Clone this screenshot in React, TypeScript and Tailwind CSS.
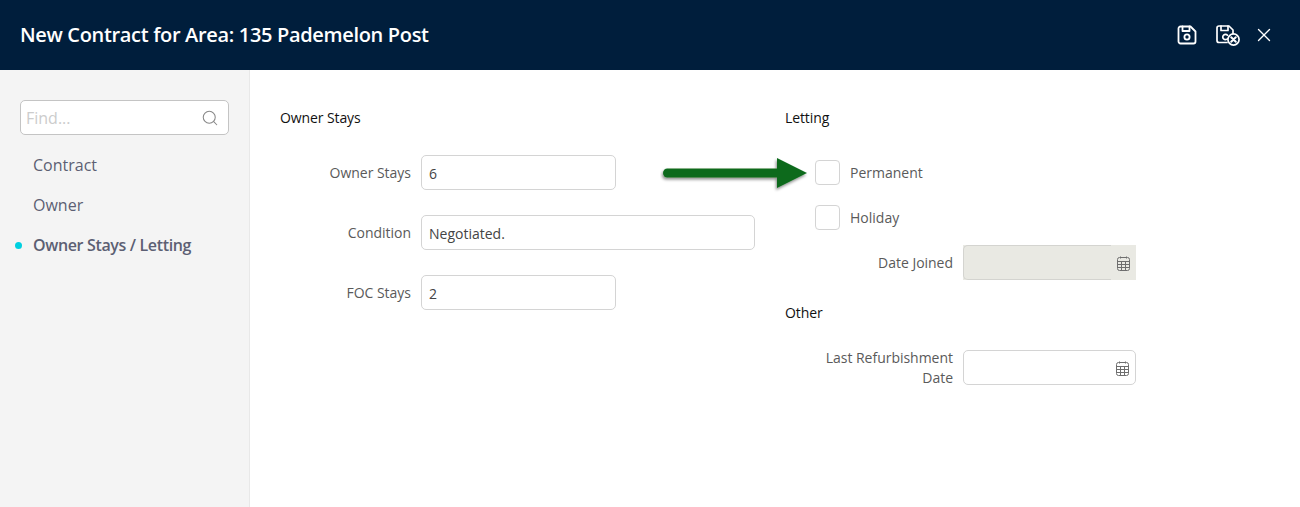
import React from 'react';
import { Search, X } from 'lucide-react';

const labelClass = 'text-[14px] leading-[20px] text-[#5a5a5a] text-right tracking-[-0.02px]';
const inputClass = 'h-[35px] rounded-[5px] border border-[#d4d4d4] bg-white pl-[7px] pr-2 pt-[1px] flex items-center text-[14px] text-[#444]';
const titleClass = 'text-[14px] font-medium leading-[22px] tracking-[-0.1px] text-[#111]';

const CalendarIcon = () => (
  <svg width="13" height="15" viewBox="0 0 13 15" fill="none" stroke="#6e6e6e" strokeWidth="1">
    <path d="M3.5 0.5v2M9.5 0.5v2" />
    <rect x="0.5" y="1.5" width="12" height="13" rx="2" />
    <path d="M0.5 5.5h12M0.5 8.5h12M0.5 11.5h12M4.5 5.5v9M8.5 5.5v9" />
  </svg>
);

const SaveCloseIcon = () => (
  <svg width="26" height="24" viewBox="0 0 26 24" fill="none" stroke="white" strokeWidth="1.7" strokeLinecap="round" strokeLinejoin="round">
    <path d="M12 19.5H4a2 2 0 0 1-2-2V5a2 2 0 0 1 2-2h10l4 4v3.5" />
    <path d="M6 3v4.5h7V3" />
    <path d="M12.5 12.2a2.7 2.7 0 1 0 0 3.6" />
    <circle cx="18.5" cy="16.5" r="5.6" />
    <path d="M16.2 14.2l4.6 4.6M20.8 14.2l-4.6 4.6" strokeWidth="2" />
  </svg>
);

const SaveDiskIcon = () => (
  <svg width="20" height="20" viewBox="0 0 20 20" fill="none" stroke="white" strokeWidth="1.8" strokeLinecap="round" strokeLinejoin="round">
    <path d="M3.5 1.5h10l5 5v10a2 2 0 0 1-2 2h-13a2 2 0 0 1-2-2v-13a2 2 0 0 1 2-2z" />
    <path d="M5.5 1.5v4.5h7V1.5" />
    <circle cx="10" cy="12" r="2.6" />
  </svg>
);

const Arrow = () => (
  <svg width="150" height="44" viewBox="0 0 150 44" className="absolute left-[660px] top-[151px]">
    <defs>
      <filter id="arrow-shadow" x="-10%" y="-30%" width="120%" height="170%">
        <feDropShadow dx="-1" dy="2" stdDeviation="1.5" floodColor="#000" floodOpacity="0.45" />
      </filter>
    </defs>
    <g filter="url(#arrow-shadow)">
      <path d="M7.5 22h112" stroke="#0e6b1c" strokeWidth="9" strokeLinecap="round" />
      <path d="M117 7l30 15-30 15z" fill="#0e6b1c" />
    </g>
  </svg>
);

const App: React.FC = () => {
  return (
    <div className="relative flex h-[507px] w-[1300px] flex-col overflow-hidden bg-white font-['Open_Sans',sans-serif]">
      <div className="flex h-[70px] shrink-0 items-center justify-between bg-[#001e3c] pl-5 pr-[25px]">
        <div className="text-[20px] font-semibold tracking-[-0.33px] text-white">New Contract for Area: 135 Pademelon Post</div>
        <div className="flex items-center">
          <SaveDiskIcon />
          <div className="ml-[18px]"><SaveCloseIcon /></div>
          <X className="ml-[12px] text-white" size={22} strokeWidth={1.5} />
        </div>
      </div>

      <div className="flex flex-1">
        <div className="w-[250px] shrink-0 border-r border-[#e8e8e8] bg-[#f4f4f4] pl-5 pt-[30px]">
          <div className="flex h-[35px] w-[209px] items-center justify-between rounded-[5px] border border-[#c4c4c4] bg-white pl-[5px] pr-[9px]">
            <span className="text-[16px] text-[#ccc]">Find...</span>
            <Search size={18} strokeWidth={1.4} className="text-[#888]" />
          </div>
          <div className="mt-[10px] flex h-[40px] items-center pl-[13px] text-[16px] text-[#5c5f73]">Contract</div>
          <div className="flex h-[40px] items-center pl-[13px] text-[16px] text-[#5c5f73]">Owner</div>
          <div className="relative flex h-[40px] items-center pl-[13px] text-[16px] font-semibold tracking-[-0.35px] text-[#5c5f73]">
            <span className="absolute left-[-5px] top-[17px] h-[7px] w-[7px] rounded-full bg-[#00d0e0]" />
            Owner Stays / Letting
          </div>
        </div>

        <div className="flex pl-[30px] pt-[37px]">
          <div className="w-[475px]">
            <div className={titleClass}>Owner Stays</div>
            <div className="mt-[26px] flex flex-col gap-[25px]">
              <div className="flex items-center">
                <div className={`w-[131px] ${labelClass}`}>Owner Stays</div>
                <div className={`ml-[10px] w-[195px] ${inputClass}`}>6</div>
              </div>
              <div className="flex items-center">
                <div className={`w-[131px] ${labelClass}`}>Condition</div>
                <div className={`ml-[10px] w-[334px] ${inputClass}`}>Negotiated.</div>
              </div>
              <div className="flex items-center">
                <div className={`w-[131px] ${labelClass}`}>FOC Stays</div>
                <div className={`ml-[10px] w-[195px] ${inputClass}`}>2</div>
              </div>
            </div>
          </div>

          <div className="ml-[30px] w-[351px]">
            <div className={titleClass}>Letting</div>
            <div className="ml-[30px] mt-[31px] flex items-center">
              <div className="h-[25px] w-[25px] rounded-[4px] border border-[#d4d4d4] bg-white" />
              <span className="ml-[10px] text-[14px] text-[#5a5a5a]">Permanent</span>
            </div>
            <div className="ml-[30px] mt-[20px] flex items-center">
              <div className="h-[25px] w-[25px] rounded-[4px] border border-[#d4d4d4] bg-white" />
              <span className="ml-[10px] text-[14px] text-[#5a5a5a]">Holiday</span>
            </div>
            <div className="mt-[15px] flex items-center">
              <div className={`w-[168px] ${labelClass}`}>Date Joined</div>
              <div className="ml-[10px] flex h-[35px] w-[173px] items-stretch bg-[#e9e9e3]">
                <div className="w-[148px] rounded-l-[5px] border-y border-l border-[#d4d4d0]" />
                <div className="flex flex-1 items-center justify-end pr-[6px] pt-[1px]">
                  <CalendarIcon />
                </div>
              </div>
            </div>
            <div className={`mt-[22px] ${titleClass}`}>Other</div>
            <div className="mt-[24px] flex items-start">
              <div className={`w-[168px] ${labelClass}`}>Last Refurbishment<br />Date</div>
              <div className="ml-[10px] mt-[2px] flex h-[35px] w-[173px] items-center justify-end rounded-[5px] border border-[#d4d4d4] bg-white pr-[6px] pt-[1px]">
                <CalendarIcon />
              </div>
            </div>
          </div>
        </div>
      </div>

      <Arrow />
    </div>
  );
};

export default App;
